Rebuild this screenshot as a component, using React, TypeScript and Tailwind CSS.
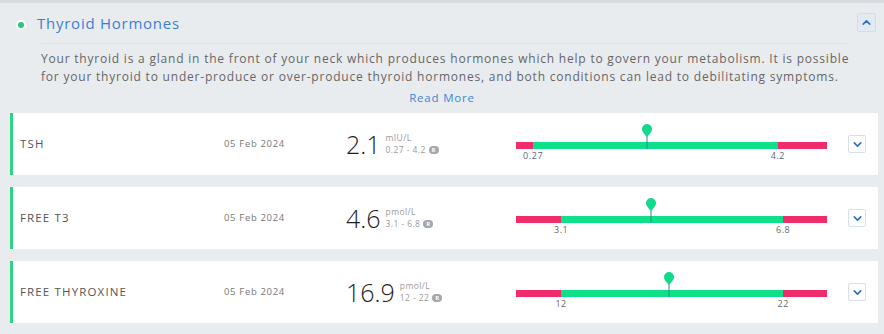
import React from 'react';
import { ChevronDown, ChevronUp } from 'lucide-react';

type Marker = {
    name: string;
    date: string;
    value: string;
    unit: string;
    low: string;
    high: string;
    // widths of the red zones (percent of the bar)
    lowPct: number;
    highPct: number;
    // pin position as percent of the whole bar
    pinPct: number;
};

const markers: Marker[] = [
    { name: 'TSH', date: '05 Feb 2024', value: '2.1', unit: 'mIU/L', low: '0.27', high: '4.2', lowPct: 5.5, highPct: 15.8, pinPct: 42.1 },
    { name: 'FREE T3', date: '05 Feb 2024', value: '4.6', unit: 'pmol/L', low: '3.1', high: '6.8', lowPct: 14.5, highPct: 14.1, pinPct: 43.4 },
    { name: 'FREE THYROXINE', date: '05 Feb 2024', value: '16.9', unit: 'pmol/L', low: '12', high: '22', lowPct: 14.5, highPct: 14.1, pinPct: 49.2 },
];

const Pin = () => (
    <svg width="10" height="25" viewBox="0 0 10 25" className="block">
        <line x1="5" y1="10" x2="5" y2="25" stroke="#2b8c86" strokeWidth="1" />
        <path d="M5 13 C3.5 11 0 8.5 0 5 A5 5 0 0 1 10 5 C10 8.5 6.5 11 5 13 Z" fill="#14d98a" />
    </svg>
);

const RangeBar = ({ m }: { m: Marker }) => (
    <div className="relative h-[7px] w-[311px]">
        <div className="flex h-full w-full">
            <div className="h-full bg-[#ef2d6a]" style={{ width: `${m.lowPct}%` }} />
            <div className="h-full flex-1 bg-[#10df8a]" />
            <div className="h-full bg-[#ef2d6a]" style={{ width: `${m.highPct}%` }} />
        </div>
        {/* pin */}
        <div className="absolute bottom-0 -translate-x-1/2" style={{ left: `${m.pinPct}%` }}>
            <Pin />
        </div>
        {/* labels under the zone edges */}
        <span
            className="absolute top-[9px] -translate-x-1/2 text-[9px] leading-[10px] tracking-[0.06em] text-[#666]"
            style={{ left: `${m.lowPct}%` }}
        >
            {m.low}
        </span>
        <span
            className="absolute top-[9px] translate-x-1/2 text-[9px] leading-[10px] tracking-[0.06em] text-[#666]"
            style={{ right: `${m.highPct}%` }}
        >
            {m.high}
        </span>
    </div>
);

const MarkerRow = ({ m }: { m: Marker }) => (
    <div className="ml-[10px] flex h-[62px] w-[868px] items-center border-l-[3px] border-[#2fd386] bg-white">
        <div className="w-[211px] pl-[7px] text-[11.5px] tracking-[0.1em] text-[#555]">{m.name}</div>
        <div className="w-[122px] text-[9.5px] tracking-[0.07em] text-[#777]">{m.date}</div>
        <div className="flex w-[170px] items-center gap-[5px]">
            <span className="text-[25px] font-light leading-none text-[#1e1e1e]">{m.value}</span>
            <div className="-mt-[1px] flex flex-col text-[8.5px] leading-[12px] tracking-[0.05em] text-[#9a9a9a]">
                <span>{m.unit}</span>
                <span className="flex items-center gap-[3px]">
                    {m.low} - {m.high}
                    <span className="flex h-[8px] w-[10px] items-center justify-center rounded-full bg-[#a3a8ab] text-[6px] font-bold leading-none text-white">
                        R
                    </span>
                </span>
            </div>
        </div>
        <div className="mt-[3px]">
            <RangeBar m={m} />
        </div>
        <button className="ml-[21px] flex h-[18px] w-[18px] items-center justify-center rounded-[2px] border border-[#d6e0ec] bg-white text-[#2f6fc4]">
            <ChevronDown size={13} strokeWidth={3} />
        </button>
    </div>
);

export default function App() {
    return (
        <div
            className="h-[334px] w-[884px] overflow-hidden border-t-[3px] border-[#d8dce1] bg-[#e9ecef]"
            style={{ fontFamily: '"Open Sans", "Liberation Sans", sans-serif' }}
        >
            <div className="pt-[9px]">
                {/* --- Header --- */}
                <div className="flex h-[20px] items-center">
                    <span className="ml-[16px] mt-[5px] h-[10px] w-[10px] rounded-full border-2 border-white bg-[#1fc97c]" />
                    <h2 className="ml-[11px] mt-[2px] text-[15px] tracking-[0.05em] text-[#3d7fcf]">Thyroid Hormones</h2>
                    <button className="ml-auto mr-[8px] mt-[1px] flex h-[19px] w-[19px] items-center justify-center rounded-[2px] border border-[#d3deea] bg-[#e2eaf3] text-[#2f6fc4]">
                        <ChevronUp size={13} strokeWidth={3} />
                    </button>
                </div>

                {/* --- Deskripsi --- */}
                <div className="ml-[41px] mt-[11px] h-px w-[806px] bg-[#dcdfe3]" />
                <div className="ml-[41px] mt-[6px] text-[12px] leading-[18px] tracking-[0.066em] text-[#666]">
                    <p className="whitespace-nowrap">
                        Your thyroid is a gland in the front of your neck which produces hormones which help to govern your metabolism. It is possible
                    </p>
                    <p className="whitespace-nowrap">
                        for your thyroid to under-produce or over-produce thyroid hormones, and both conditions can lead to debilitating symptoms.
                    </p>
                </div>
                <div className="mt-[3px] text-center text-[11.5px] leading-[18px] tracking-[0.07em] text-[#3a86d6]">
                    <a href="#">Read More</a>
                </div>

                {/* --- Hasil --- */}
                <div className="mt-[6px] flex flex-col gap-[12px]">
                    {markers.map((m) => (
                        <MarkerRow key={m.name} m={m} />
                    ))}
                </div>
            </div>
        </div>
    );
}
